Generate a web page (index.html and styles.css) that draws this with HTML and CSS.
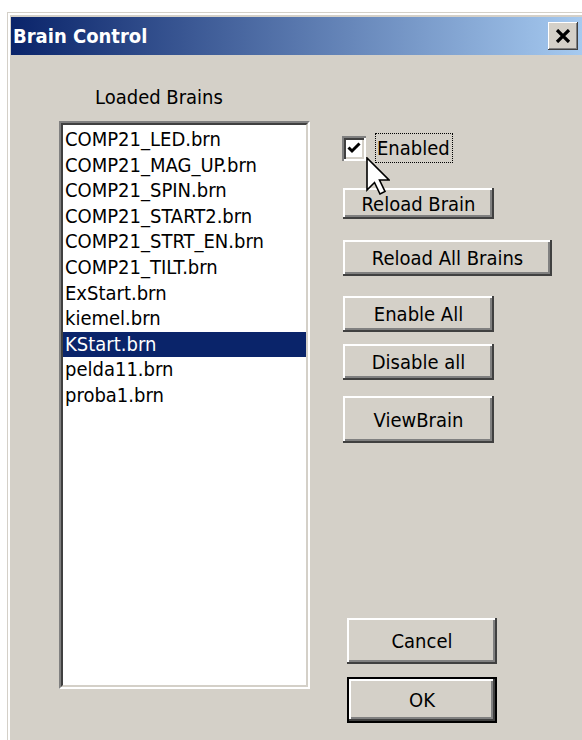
FILE: index.html
```html
<!DOCTYPE html>
<html>
<head>
<meta charset="utf-8">
<title>Brain Control</title>
<link rel="stylesheet" href="styles.css">
</head>
<body>
<div class="window">
  <div class="titlebar">
    <span class="title">Brain Control</span>
    <button class="close" aria-label="Close">
      <svg viewBox="0 0 16 14" width="16" height="14"><path d="M2 1 L14 13 M14 1 L2 13" stroke="#000" stroke-width="3.2" fill="none"/></svg>
    </button>
  </div>
  <div class="content">
    <div class="left-col">
      <div class="caption">Loaded Brains</div>
      <div class="listbox">
        <ul class="items">
          <li>COMP21_LED.brn</li>
          <li>COMP21_MAG_UP.brn</li>
          <li>COMP21_SPIN.brn</li>
          <li>COMP21_START2.brn</li>
          <li>COMP21_STRT_EN.brn</li>
          <li>COMP21_TILT.brn</li>
          <li>ExStart.brn</li>
          <li>kiemel.brn</li>
          <li class="selected">KStart.brn</li>
          <li>pelda11.brn</li>
          <li>proba1.brn</li>
        </ul>
      </div>
    </div>
    <div class="right-col">
      <label class="check">
        <span class="box"><svg viewBox="0 0 16 16" width="16" height="16"><path d="M2.5 7.5 L6 11 L13.5 3.5" stroke="#000" stroke-width="3" fill="none"/></svg></span>
        <span class="focus">Enabled</span>
      </label>
      <button class="btn reload">Reload Brain</button>
      <button class="btn reload-all">Reload All Brains</button>
      <button class="btn enable-all">Enable All</button>
      <button class="btn disable-all">Disable all</button>
      <button class="btn view">ViewBrain</button>
      <button class="btn cancel">Cancel</button>
      <button class="btn ok">OK</button>
    </div>
  </div>
  <svg class="pointer" viewBox="0 0 24 38" width="24" height="38">
    <path d="M1 1 L1 33 L8.5 25.5 L14 37 L19 34.5 L13.5 23 L23 23 Z" fill="#fff" stroke="#000" stroke-width="1.6" stroke-linejoin="miter"/>
  </svg>
</div>
</body>
</html>
```

FILE: styles.css
```css
html, body {
  margin: 0;
  padding: 0;
  background: #ffffff;
  overflow: hidden;
}

body {
  width: 582px;
  height: 740px;
  font-family: "DejaVu Sans Condensed", "DejaVu Sans", sans-serif;
  font-stretch: condensed;
  font-size: 20px;
  color: #000;
}

.window {
  position: relative;
  margin: 12px 0 0 7px;
  width: 590px;
  height: 740px;
  box-sizing: border-box;
  background: #d4d0c8;
  border-top: 1px solid #d4d0c8;
  border-left: 1px solid #d4d0c8;
  box-shadow: inset 2px 2px #ffffff;
  padding: 4px 0 0 3px;
}

/* caption bar */
.titlebar {
  display: flex;
  align-items: center;
  justify-content: space-between;
  width: 571px;
  height: 38px;
  box-sizing: border-box;
  padding: 0 4px 0 2px;
  background: linear-gradient(to right, #0a246a, #a6caf0);
}

.title {
  color: #fff;
  font-weight: bold;
  font-size: 20px;
  line-height: 38px;
}

.close {
  width: 30px;
  height: 28px;
  padding: 0;
  display: flex;
  align-items: center;
  justify-content: center;
  background: #d4d0c8;
  border: 0;
  box-shadow: inset -1px -1px #404040, inset 1px 1px #ffffff, inset -2px -2px #808080;
}

.content {
  display: flex;
}

/* list column */
.left-col {
  margin-left: 48px;
  width: 251px;
}

.caption {
  margin-top: 29px;
  padding-left: 36px;
  line-height: 26px;
  height: 26px;
}

.listbox {
  margin-top: 11px;
  height: 568px;
  box-sizing: border-box;
  border: 2px solid;
  border-color: #808080 #ffffff #ffffff #808080;
}

.items {
  list-style: none;
  margin: 0;
  height: 100%;
  box-sizing: border-box;
  padding: 2px 0 0 0;
  background: #fff;
  border: 2px solid;
  border-color: #404040 #d4d0c8 #d4d0c8 #404040;
}

.items li {
  height: 25.6px;
  line-height: 25.6px;
  padding-left: 2px;
  white-space: nowrap;
}

.items li.selected {
  background: #0a246a;
  color: #fff;
}

/* control column */
.right-col {
  margin-left: 32px;
  display: flex;
  flex-direction: column;
  align-items: flex-start;
}

.check {
  margin-top: 78px;
  height: 30px;
  display: flex;
  align-items: center;
  gap: 9px;
}

.box {
  width: 24px;
  height: 25px;
  box-sizing: border-box;
  display: flex;
  align-items: center;
  justify-content: center;
  background: #fff;
  box-shadow: inset 2px 2px #808080, inset -2px -2px #ffffff, inset 4px 4px #404040, inset -4px -4px #d4d0c8;
}

.focus {
  height: 30px;
  line-height: 28px;
  box-sizing: border-box;
  padding: 0 2px 0 1px;
  border: 1px dotted #000;
}

.btn {
  font: inherit;
  color: #000;
  background: #d4d0c8;
  border: 0;
  padding: 0;
  margin-left: 1px;
  width: 151px;
  height: 36px;
  box-sizing: border-box;
  box-shadow: inset -2px -2px #404040, inset 2px 2px #ffffff, inset -4px -4px #808080;
}

.reload { margin-top: 25px; height: 31px; }
.reload-all { margin-top: 21px; width: 209px; }
.enable-all { margin-top: 20px; }
.disable-all { margin-top: 12px; }
.view { margin-top: 16px; height: 47px; }

.cancel {
  margin-top: 175px;
  margin-left: 5px;
  width: 150px;
  height: 46px;
}

.ok {
  margin-top: 13px;
  margin-left: 5px;
  width: 150px;
  height: 46px;
  border: 2px solid #000;
}

/* mouse pointer resting over the checkbox */
.pointer {
  position: absolute;
  left: 358px;
  top: 144px;
}
```
